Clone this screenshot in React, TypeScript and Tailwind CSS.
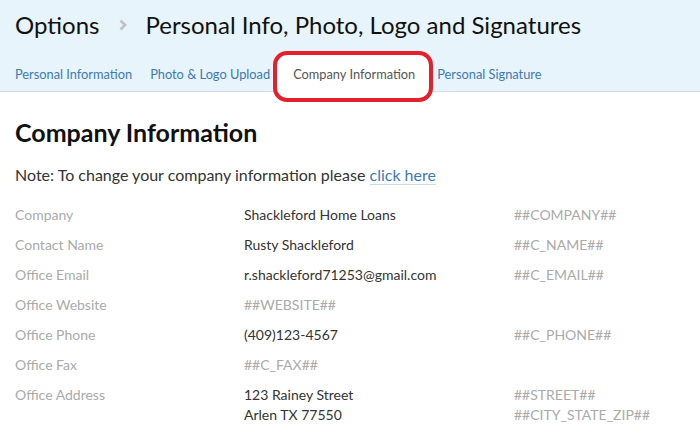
const tabs = ["Personal Information", "Photo & Logo Upload", "Company Information", "Personal Signature"];

const rows: { label: string; value: string[]; muted?: boolean; tag: string[] }[] = [
  { label: "Company", value: ["Shackleford Home Loans"], tag: ["##COMPANY##"] },
  { label: "Contact Name", value: ["Rusty Shackleford"], tag: ["##C_NAME##"] },
  { label: "Office Email", value: ["r.shackleford71253@gmail.com"], tag: ["##C_EMAIL##"] },
  { label: "Office Website", value: ["##WEBSITE##"], muted: true, tag: [] },
  { label: "Office Phone", value: ["(409)123-4567"], tag: ["##C_PHONE##"] },
  { label: "Office Fax", value: ["##C_FAX##"], muted: true, tag: [] },
  { label: "Office Address", value: ["123 Rainey Street", "Arlen TX 77550"], tag: ["##STREET##", "##CITY_STATE_ZIP##"] },
];

const App = () => (
  <div className="w-[700px] h-[440px] overflow-hidden bg-white font-['Lato',sans-serif] relative">
    <div className="bg-[#e8f4fb] border-b border-[#d6dde2]">
      <div className="h-[50px] flex items-center px-[15px] text-[24px] text-[#111]">
        <span>Options</span>
        <svg width="10" height="12" viewBox="0 0 10 12" className="ml-[19px] mr-[17px]">
          <path d="M2.5 1.5 L7 6 L2.5 10.5" fill="none" stroke="#c0c4c8" strokeWidth="2.8" />
        </svg>
        <span>Personal Info, Photo, Logo and Signatures</span>
      </div>
      <div className="flex pl-[6px] mt-[5px] h-[37px] text-[12.8px] -mb-px">
        {tabs.map((t) =>
          t === "Company Information" ? (
            <div key={t} className="-ml-[2px] pl-[16px] pr-[15px] pt-[3px] flex items-center bg-white text-[#555] border-b border-white">
              {t}
            </div>
          ) : (
            <div key={t} className={`px-[9px] pt-[3px] flex items-center text-[#3d79b3] ${t === "Personal Signature" ? "-ml-[2px]" : ""}`}>
              {t}
            </div>
          )
        )}
      </div>
    </div>

    <div className="px-[15px]">
      <h1 className="text-[25px] font-bold text-[#111] mt-[25px] leading-[30px]">Company Information</h1>
      <p className="text-[16px] text-[#333] mt-[18px] leading-[20px]">
        Note: To change your company information please{" "}
        <span className="text-[#3d79b3] border-b border-[#c9dbe9]">click here</span>
      </p>
      <div className="mt-[15px] text-[14px]">
        {rows.map((r) => (
          <div key={r.label} className="flex">
            <div className="w-[229px] text-[#aaa] leading-[20px] py-[5px]">{r.label}</div>
            <div className={`w-[270px] py-[5px] leading-[20px] ${r.muted ? "text-[#aaa]" : "text-[#333]"}`}>
              {r.value.map((v) => (
                <div key={v}>{v}</div>
              ))}
            </div>
            <div className="py-[5px] leading-[20px] text-[#aaa]">
              {r.tag.map((v) => (
                <div key={v}>{v}</div>
              ))}
            </div>
          </div>
        ))}
      </div>
    </div>

    <div className="absolute left-[273px] top-[51px] w-[160px] h-[51px] border-[4px] border-[#e3202b] rounded-[14px]" />
  </div>
);

export default App;
